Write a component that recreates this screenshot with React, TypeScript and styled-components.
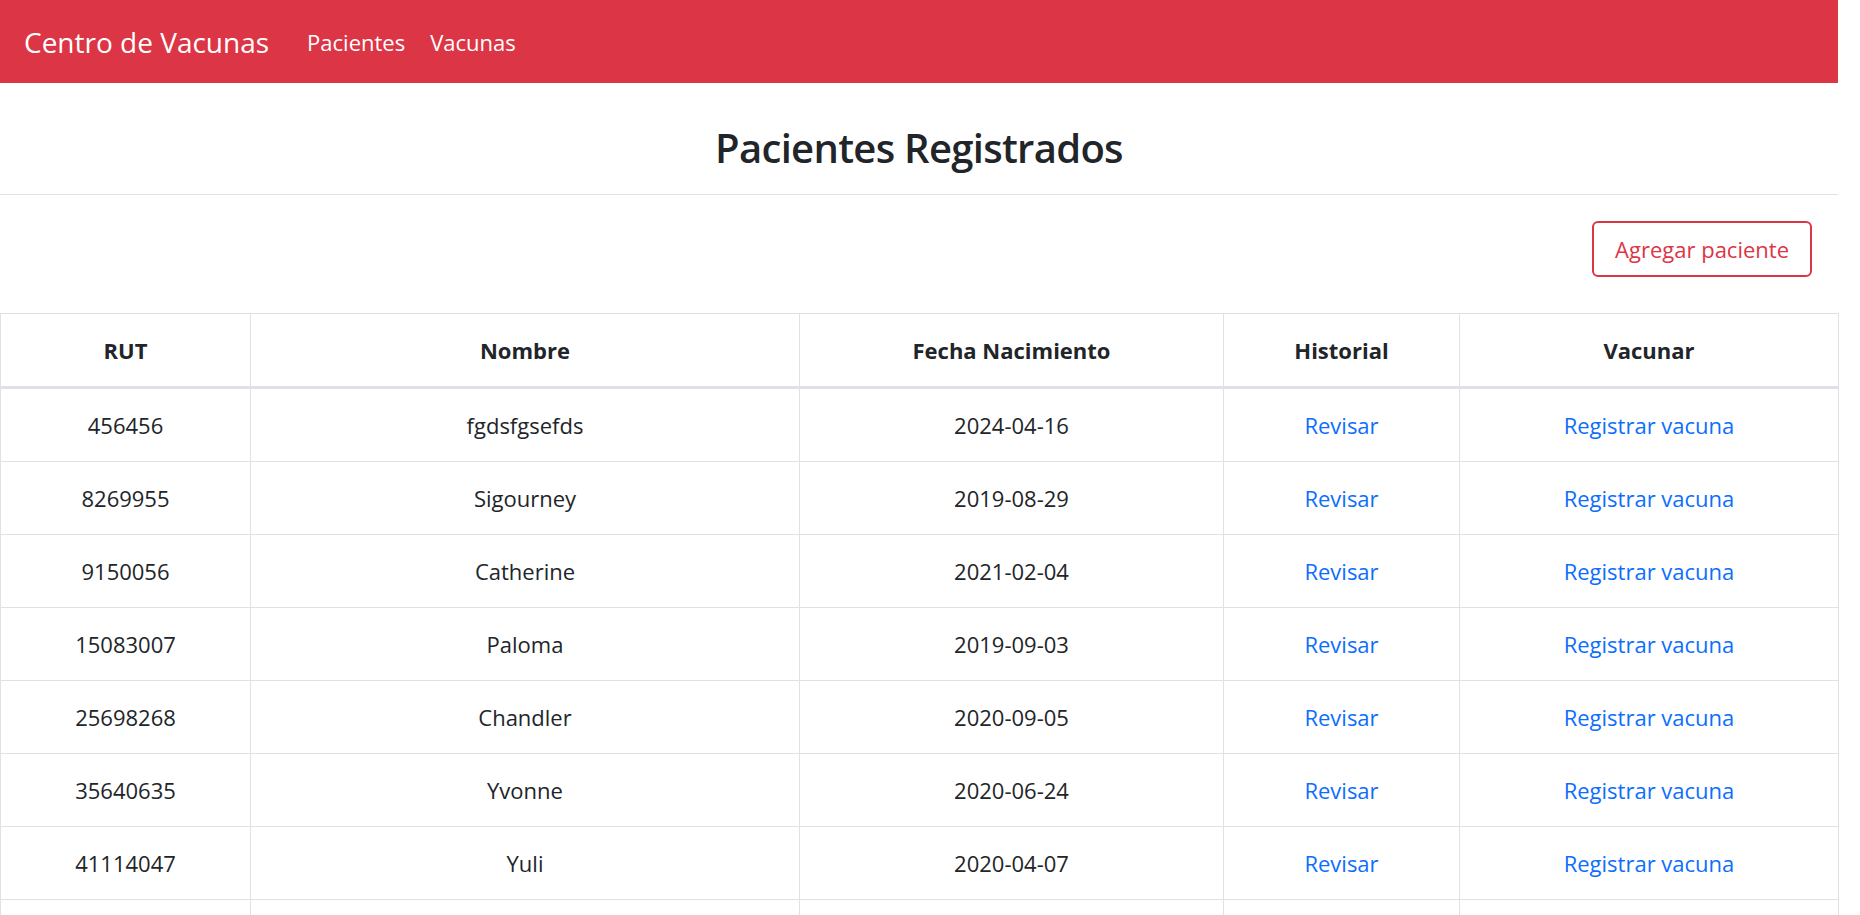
import { FC, ReactElement } from "react";
import styled, { createGlobalStyle } from "styled-components";

const GlobalStyle = createGlobalStyle`
  html, body {
    margin: 0;
    padding: 0;
    overflow: hidden;
    background: #fff;
  }
  body {
    font-family: "Open Sans", "Noto Sans", sans-serif;
    font-size: 22px;
    line-height: 36px;
    color: #212529;
  }
  * {
    box-sizing: border-box;
  }
`;

const Page = styled.div`
  width: 1838px;
  background: #fff;
`;

const Navbar = styled.nav`
  height: 83px;
  background-color: #dc3545;
  display: flex;
  align-items: center;
  padding: 0 24px;
`;

const Brand = styled.a`
  color: #fff;
  font-size: 28px;
  line-height: 44px;
  text-decoration: none;
  margin-right: 38px;
`;

const NavList = styled.ul`
  display: flex;
  list-style: none;
  margin: 0;
  padding: 0;
  gap: 25px;
`;

const NavLink = styled.a`
  color: #fff;
  font-size: 22px;
  text-decoration: none;
`;

const TitleBox = styled.header`
  padding: 41px 0 22px;
  border-bottom: 1px solid #e3e3e3;
  text-align: center;
`;

const Title = styled.h1`
  margin: 0;
  font-size: 40px;
  line-height: 48px;
  font-weight: 600;
  letter-spacing: -0.7px;
  color: #212529;
`;

const Toolbar = styled.div`
  display: flex;
  justify-content: flex-end;
  padding: 26px 26px 36px 0;
`;

const OutlineButton = styled.button`
  font-family: inherit;
  font-size: 22px;
  line-height: 36px;
  color: #dc3545;
  background: #fff;
  border: 2px solid #dc3545;
  border-radius: 6px;
  padding: 8px 21px;
  cursor: pointer;
`;

const Table = styled.table`
  width: 100%;
  table-layout: fixed;
  border-collapse: collapse;
  border: 1px solid #dee2e6;
`;

const HeadCell = styled.th`
  padding: 18px;
  font-weight: 700;
  text-align: center;
  border: 1px solid #dee2e6;
  border-bottom: 3px solid #dee2e6;
`;

const Cell = styled.td`
  padding: 18px;
  text-align: center;
  border: 1px solid #dee2e6;
  white-space: nowrap;
`;

const TableLink = styled.a`
  color: #0d6efd;
  text-decoration: none;
`;

const patients = [
  { rut: "456456", name: "fgdsfgsefds", birth: "2024-04-16" },
  { rut: "8269955", name: "Sigourney", birth: "2019-08-29" },
  { rut: "9150056", name: "Catherine", birth: "2021-02-04" },
  { rut: "15083007", name: "Paloma", birth: "2019-09-03" },
  { rut: "25698268", name: "Chandler", birth: "2020-09-05" },
  { rut: "35640635", name: "Yvonne", birth: "2020-06-24" },
  { rut: "41114047", name: "Yuli", birth: "2020-04-07" },
  { rut: "52030118", name: "Martina", birth: "2021-11-12" },
];

const columns = [
  { label: "RUT", width: 250 },
  { label: "Nombre", width: 549 },
  { label: "Fecha Nacimiento", width: 424 },
  { label: "Historial", width: 236 },
  { label: "Vacunar", width: 379 },
];

export const App: FC = (): ReactElement => {
  return (
    <Page>
      <GlobalStyle />
      <Navbar>
        <Brand href="#">Centro de Vacunas</Brand>
        <NavList>
          <li>
            <NavLink href="#">Pacientes</NavLink>
          </li>
          <li>
            <NavLink href="#">Vacunas</NavLink>
          </li>
        </NavList>
      </Navbar>

      <TitleBox>
        <Title>Pacientes Registrados</Title>
      </TitleBox>

      <Toolbar>
        <OutlineButton>Agregar paciente</OutlineButton>
      </Toolbar>

      <Table>
        <colgroup>
          {columns.map((col) => (
            <col key={col.label} style={{ width: col.width }} />
          ))}
        </colgroup>
        <thead>
          <tr>
            {columns.map((col) => (
              <HeadCell key={col.label}>{col.label}</HeadCell>
            ))}
          </tr>
        </thead>
        <tbody>
          {patients.map((p) => (
            <tr key={p.rut}>
              <Cell>{p.rut}</Cell>
              <Cell>{p.name}</Cell>
              <Cell>{p.birth}</Cell>
              <Cell>
                <TableLink href="#">Revisar</TableLink>
              </Cell>
              <Cell>
                <TableLink href="#">Registrar vacuna</TableLink>
              </Cell>
            </tr>
          ))}
        </tbody>
      </Table>
    </Page>
  );
};

export default App;
